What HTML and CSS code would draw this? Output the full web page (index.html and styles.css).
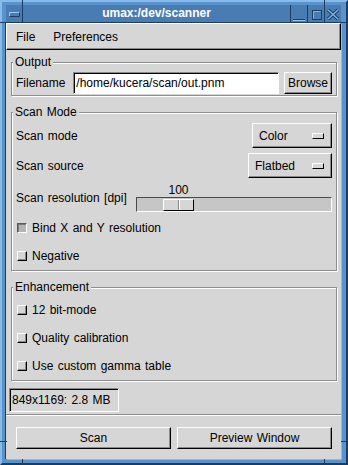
FILE: index.html
```html
<!DOCTYPE html>
<html lang="en">
<head>
    <meta charset="UTF-8">
    <title>umax:/dev/scanner</title>
    <link rel="stylesheet" href="styles.css">
</head>
<body>
    <div class="window">
        <!-- resize handle marks on the frame -->
        <span class="notch notch-v" style="left:20px; top:-2px;"></span>
        <span class="notch notch-v" style="left:322px; top:-2px;"></span>
        <span class="notch notch-v" style="left:20px; bottom:-2px;"></span>
        <span class="notch notch-v" style="left:322px; bottom:-2px;"></span>
        <span class="notch notch-h" style="left:-2px; top:20px;"></span>
        <span class="notch notch-h" style="right:-2px; top:20px;"></span>
        <span class="notch notch-h" style="left:-2px; top:439px;"></span>
        <span class="notch notch-h" style="right:-2px; top:439px;"></span>

        <div class="titlebar">
            <div class="tb-btn tb-menu">
                <svg width="16" height="17" viewBox="0 0 16 17">
                    <path d="M3.5 11.5V7.5H13.5" stroke="#9ccaf4" fill="none"/>
                    <path d="M3.5 11.5H13.5V7.5" stroke="#1e3c60" fill="none"/>
                </svg>
            </div>
            <div class="tb-title">umax:/dev/scanner</div>
            <div class="tb-btn">
                <svg width="16" height="17" viewBox="0 0 16 17">
                    <path d="M2 14.5H14" stroke="#1e3c60"/>
                    <path d="M2 15.5H14" stroke="#9ccaf4"/>
                </svg>
            </div>
            <div class="tb-btn">
                <svg width="16" height="17" viewBox="0 0 16 17">
                    <rect x="4.5" y="5.5" width="9" height="9" stroke="#1e3c60" fill="none"/>
                    <path d="M5.5 13.5V6.5H12.5" stroke="#7fb2e6" fill="none"/>
                </svg>
            </div>
            <div class="tb-btn">
                <svg width="16" height="17" viewBox="0 0 16 17">
                    <path d="M3 5L13 14M13 5L3 14" stroke="#1e3c60" stroke-width="3.5"/>
                    <path d="M3 5L13 14M13 5L3 14" stroke="#7fb2e6" stroke-width="1.5"/>
                </svg>
            </div>
        </div>

        <div class="client">
            <div class="menubar">
                <span class="menu-item">File</span>
                <span class="menu-item">Preferences</span>
            </div>

            <div class="panel">
                <fieldset class="group group-output">
                    <legend>Output</legend>
                    <div class="row row-file">
                        <span class="row-label">Filename</span>
                        <div class="entry">/home/kucera/scan/out.pnm</div>
                        <button class="btn btn-browse">Browse</button>
                    </div>
                </fieldset>

                <fieldset class="group group-mode">
                    <legend>Scan Mode</legend>
                    <div class="row row-option">
                        <span>Scan mode</span>
                        <div class="option option-mode"><span>Color</span><i class="option-ind"></i></div>
                    </div>
                    <div class="row row-option">
                        <span>Scan source</span>
                        <div class="option option-source"><span>Flatbed</span><i class="option-ind"></i></div>
                    </div>
                    <div class="row row-scale">
                        <span>Scan resolution [dpi]</span>
                        <div class="scale">
                            <div class="scale-value" style="margin-left:27px;">100</div>
                            <div class="trough">
                                <div class="thumb" style="margin-left:26px;"></div>
                            </div>
                        </div>
                    </div>
                    <div class="check checked"><i class="check-box"></i>Bind X and Y resolution</div>
                    <div class="check"><i class="check-box"></i>Negative</div>
                </fieldset>

                <fieldset class="group group-enh">
                    <legend>Enhancement</legend>
                    <div class="check"><i class="check-box"></i>12 bit-mode</div>
                    <div class="check"><i class="check-box"></i>Quality calibration</div>
                    <div class="check"><i class="check-box"></i>Use custom gamma table</div>
                </fieldset>

                <div class="status">849x1169: 2.8 MB</div>
            </div>

            <div class="separator"></div>

            <div class="actions">
                <button class="btn">Scan</button>
                <button class="btn">Preview Window</button>
            </div>
        </div>
    </div>
</body>
</html>
```

FILE: styles.css
```css
* {
    box-sizing: border-box;
}

body {
    margin: 0;
    font-family: "Liberation Sans", Arial, sans-serif;
    font-size: 12px;
    word-spacing: 1px;
    color: #000;
    background: #5a92cc;
}

.window {
    position: relative;
    width: 348px;
    height: 465px;
    display: flex;
    flex-direction: column;
    background: #5a92cc;
    border: 2px solid;
    border-color: #86bbec #1e3c60 #1e3c60 #86bbec;
    padding: 3px 5px 4px 4px;
}

.notch {
    position: absolute;
    background: #1e3c60;
}

.notch-v {
    width: 1px;
    height: 6px;
}

.notch-h {
    width: 7px;
    height: 1px;
}

/* title bar */

.titlebar {
    flex: none;
    height: 18px;
    display: flex;
    background: #4a7cb4;
    border-bottom: 1px solid #1e3c60;
}

.tb-btn {
    width: 17px;
    border-left: 1px solid #1e3c60;
}

.tb-btn svg {
    display: block;
}

.tb-menu {
    border-left: none;
    border-right: 1px solid #1e3c60;
}

.tb-title {
    flex: 1;
    text-align: center;
    color: #fff;
    font-weight: bold;
    line-height: 17px;
}

/* client area */

.client {
    flex: 1;
    display: flex;
    flex-direction: column;
    background: #d6d6d6;
    box-shadow: -1px 0 0 #1e3c60, 1px 1px 0 #86bbec;
}

.menubar {
    flex: none;
    height: 27px;
    display: flex;
    align-items: center;
    border: 1px solid;
    border-color: #fff #000 #000 #fff;
    box-shadow: inset -1px -1px 0 #8a8a8a;
}

.menu-item {
    padding: 0 9px;
}

.panel {
    display: flex;
    flex-direction: column;
    padding: 5px 2px 0 3px;
}

.group {
    margin: 0 2px;
    padding: 0 4px;
    min-width: 0;
    border: 1px solid #8e8e8e;
    box-shadow: inset 1px 1px 0 #fff, 1px 1px 0 #fff;
}

.group + .group {
    margin-top: 9px;
}

.group legend {
    margin-left: -3px;
    padding: 0 2px;
    line-height: 15px;
    background: #d6d6d6;
}

.group-output {
    padding: 2px 4px 1px;
}

.group-mode {
    padding: 3px 4px 0;
}

.group-enh {
    padding: 1px 4px 0;
}

.row {
    display: flex;
    align-items: center;
}

.row-file {
    height: 22px;
}

.row-label {
    margin-right: 8px;
}

.entry {
    flex: 1;
    height: 22px;
    padding-left: 2px;
    line-height: 20px;
    white-space: nowrap;
    overflow: hidden;
    background: #fff;
    border: 1px solid;
    border-color: #8a8a8a #fff #fff #8a8a8a;
    box-shadow: inset 1px 1px 0 #000;
}

.btn {
    font: inherit;
    word-spacing: inherit;
    color: #000;
    padding: 0;
    border-radius: 0;
    background: #d6d6d6;
    border: 1px solid;
    border-color: #fff #000 #000 #fff;
    box-shadow: inset -1px -1px 0 #8a8a8a;
}

.btn-browse {
    width: 48px;
    height: 22px;
    margin-left: 5px;
}

/* option menus */

.row-option {
    height: 25px;
    justify-content: space-between;
}

.row-option + .row-option {
    margin-top: 5px;
}

.option {
    height: 25px;
    display: flex;
    align-items: center;
    justify-content: space-between;
    padding: 0 7px 0 6px;
    border: 1px solid;
    border-color: #fff #000 #000 #fff;
    box-shadow: inset -1px -1px 0 #8a8a8a;
}

.option-mode {
    width: 80px;
}

.option-source {
    width: 84px;
}

.option-ind {
    width: 12px;
    height: 6px;
    border: 1px solid;
    border-color: #fff #000 #000 #fff;
}

/* resolution scale */

.row-scale {
    height: 29px;
    margin-top: 5px;
}

.scale {
    width: 196px;
    margin-left: auto;
}

.scale-value {
    width: 31px;
    line-height: 14px;
    text-align: center;
}

.trough {
    height: 15px;
    padding-top: 1px;
    background: #c6c6c6;
    border: 1px solid;
    border-color: #4a4a4a #fff #fff #4a4a4a;
}

.thumb {
    width: 31px;
    height: 12px;
    border: 1px solid;
    border-color: #fff #000 #000 #fff;
    background: linear-gradient(to right, transparent 14px, #8a8a8a 14px, #8a8a8a 15px, #fff 15px, #fff 16px, transparent 16px) #d6d6d6;
}

/* check buttons */

.check {
    height: 28px;
    display: flex;
    align-items: center;
}

.row-scale + .check {
    margin-top: 2px;
}

.check-box {
    width: 10px;
    height: 10px;
    margin: 0 5px 0 1px;
    border: 1px solid;
    border-color: #fff #000 #000 #fff;
    box-shadow: inset -1px -1px 0 #8a8a8a;
}

.checked .check-box {
    background: #b4b4b4;
    border-color: #5a5a5a #fff #fff #5a5a5a;
    box-shadow: inset 1px 1px 0 #7a7a7a;
}

/* status + buttons */

.status {
    width: 110px;
    height: 24px;
    margin-top: 7px;
    padding-left: 2px;
    line-height: 22px;
    white-space: nowrap;
    border: 1px solid;
    border-color: #8a8a8a #fff #fff #8a8a8a;
    box-shadow: inset 1px 1px 0 #000;
}

.separator {
    margin-top: 2px;
    border-top: 1px solid #8e8e8e;
    border-bottom: 1px solid #fff;
}

.actions {
    display: flex;
    gap: 6px;
    padding: 11px 9px 0 10px;
}

.actions .btn {
    flex: 1;
    height: 22px;
}
```
